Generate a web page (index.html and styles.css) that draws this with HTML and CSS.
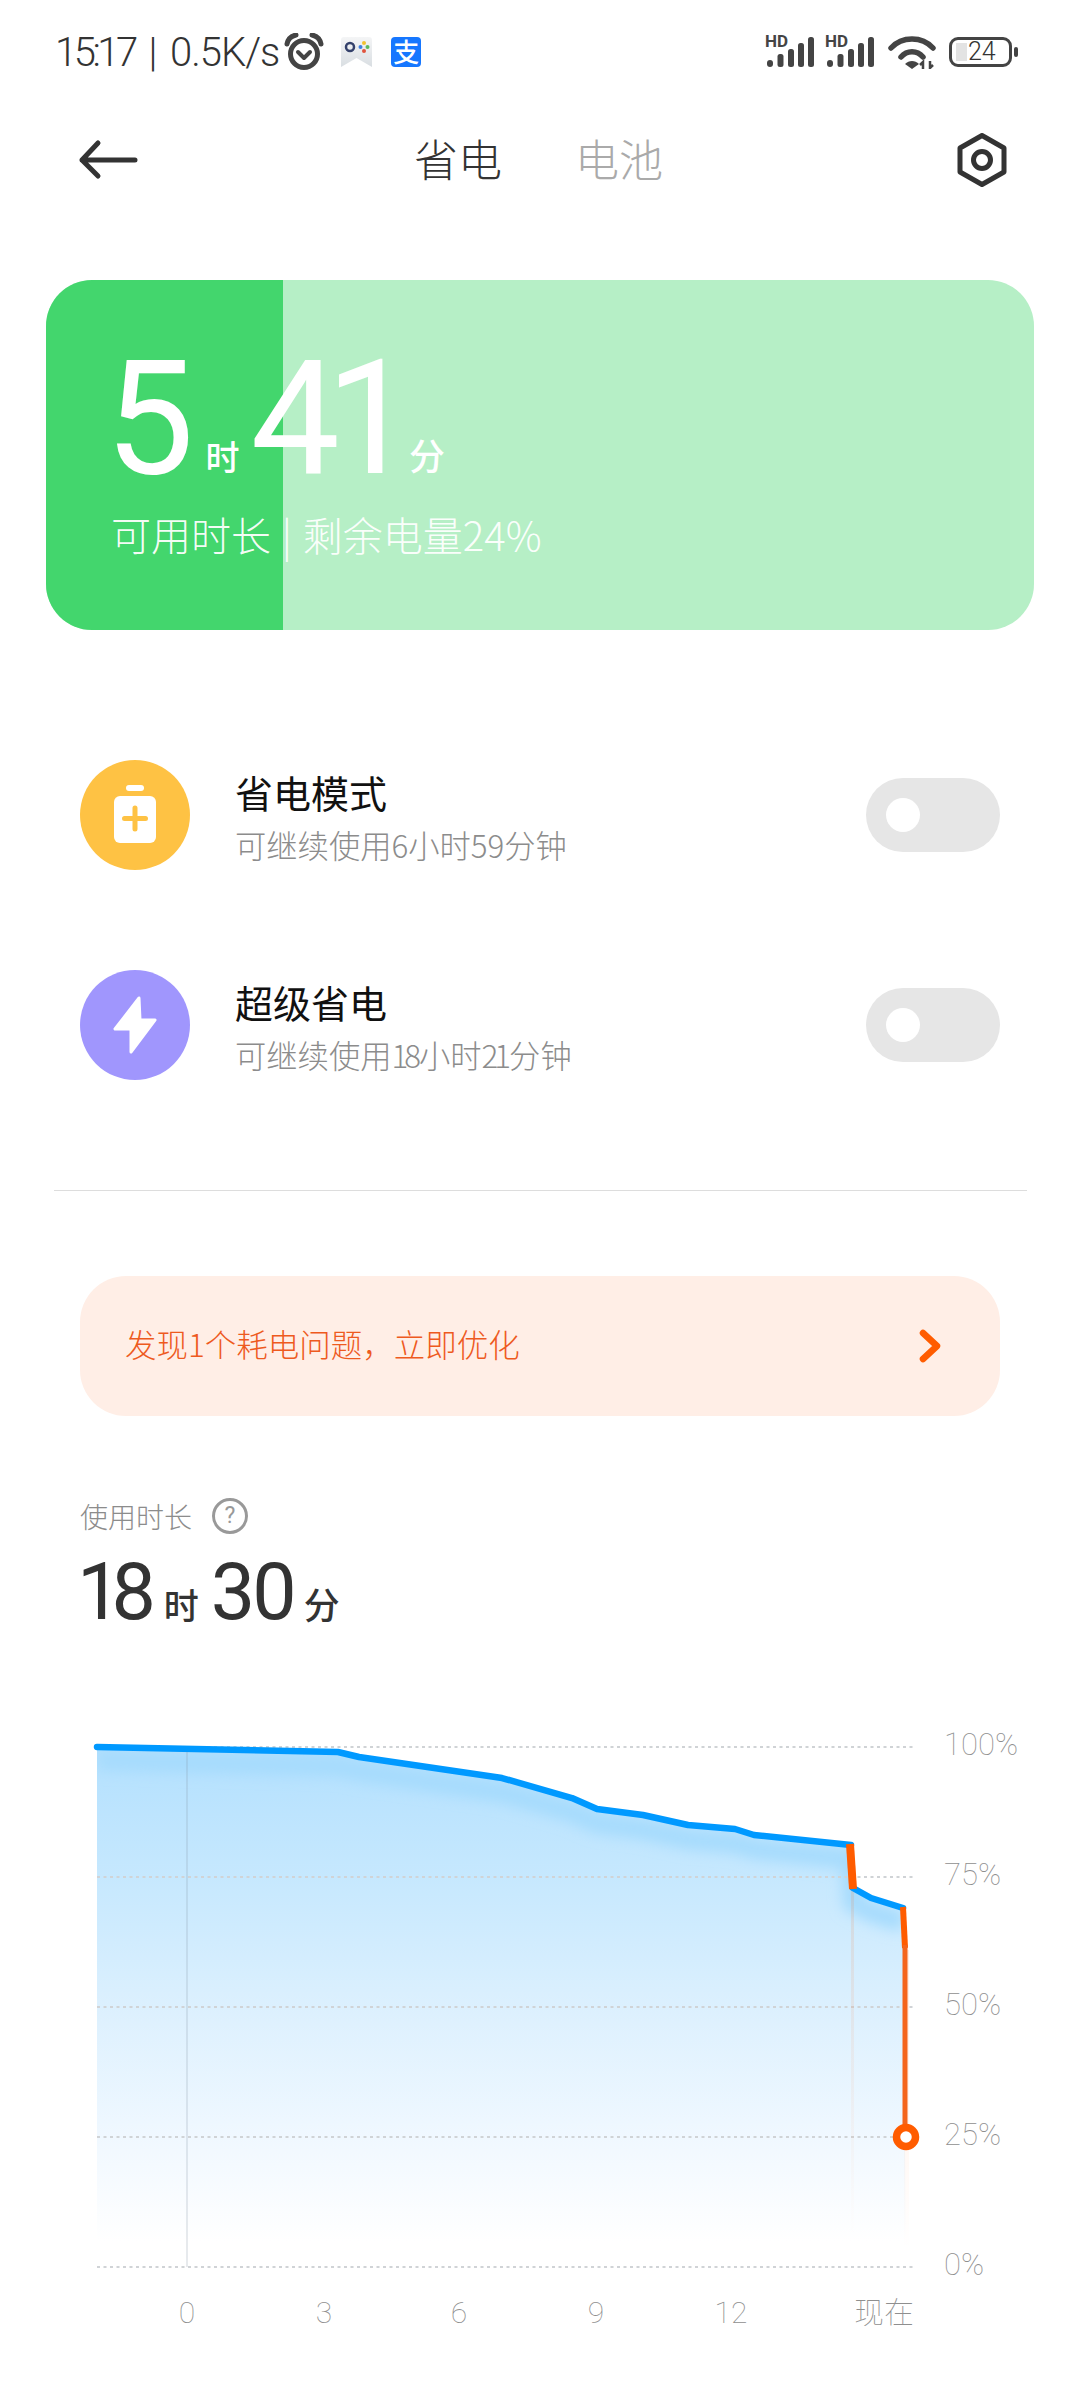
FILE: index.html
```html
<!DOCTYPE html>
<html>
<head>
    <meta charset="utf-8">
    <title>省电</title>
    <link rel="stylesheet" href="styles.css">
</head>
<body>

<div class="status">
    <div class="status-left">
        <span class="status-text"><span class="clock">15:17</span> | 0.5K/s</span>
        <svg class="ic-alarm" width="40" height="38" viewBox="0 0 40 38">
            <circle cx="20" cy="21" r="13.500" fill="none" stroke="#444" stroke-width="5"/>
            <path d="M3 11 C4 6 7 3 12 2 M37 11 C36 6 33 3 28 2" fill="none" stroke="#444" stroke-width="5" stroke-linecap="round"/>
            <path d="M14 19 L20 25 L26 19" fill="none" stroke="#444" stroke-width="4" stroke-linecap="round" stroke-linejoin="round"/>
        </svg>
        <svg class="ic-game" width="31" height="30" viewBox="0 0 31 30">
            <defs>
                <linearGradient id="gameBg" x1="0" y1="0" x2="0" y2="1">
                    <stop offset="0" stop-color="#f4f5f6"/>
                    <stop offset="1" stop-color="#d9dee2"/>
                </linearGradient>
            </defs>
            <path d="M3 0 H28 Q31 0 31 3 V30 L15.500 21 L0 30 V3 Q0 0 3 0 Z" fill="url(#gameBg)"/>
            <circle cx="9" cy="10" r="4" fill="none" stroke="#34416b" stroke-width="2.500"/>
            <circle cx="23" cy="6" r="2" fill="#f2c230"/>
            <circle cx="19.500" cy="10" r="2" fill="#3f7fe0"/>
            <circle cx="26.500" cy="10" r="2" fill="#5cb85c"/>
            <circle cx="23" cy="14" r="2" fill="#e0533d"/>
        </svg>
        <span class="ic-alipay">支</span>
    </div>
    <div class="status-right">
        <svg class="ic-signal" width="50" height="44" viewBox="0 -6 50 44">
            <text x="0" y="11" class="hd">HD</text>
            <rect x="2" y="24" width="6" height="7" rx="3"/>
            <rect x="12.500" y="18" width="6" height="13" rx="2.500"/>
            <rect x="23" y="13" width="6" height="18" rx="2.500"/>
            <rect x="33" y="7" width="6" height="24" rx="2.500"/>
            <rect x="43" y="1" width="6" height="30" rx="2.500"/>
        </svg>
        <svg class="ic-signal" width="50" height="44" viewBox="0 -6 50 44">
            <text x="0" y="11" class="hd">HD</text>
            <rect x="2" y="24" width="6" height="7" rx="3"/>
            <rect x="12.500" y="18" width="6" height="13" rx="2.500"/>
            <rect x="23" y="13" width="6" height="18" rx="2.500"/>
            <rect x="33" y="7" width="6" height="24" rx="2.500"/>
            <rect x="43" y="1" width="6" height="30" rx="2.500"/>
        </svg>
        <svg class="ic-wifi" width="48" height="34" viewBox="0 0 48 34">
            <path d="M3 13 C14 1 34 1 45 13" fill="none" stroke="#444" stroke-width="5.500" stroke-linecap="round"/>
            <path d="M13 22 C19 15 29 15 35 22" fill="none" stroke="#444" stroke-width="5.500" stroke-linecap="round"/>
            <path d="M24 34 L17 29 C21 25 27 25 31 29 Z" fill="#444"/>
            <path d="M35 34 V27 L32 30 M42 26 V33 L45 30" fill="none" stroke="#444" stroke-width="2.500"/>
        </svg>
        <div class="battery">
            <div class="battery-body">
                <div class="battery-fill"></div>
                <span class="battery-num">24</span>
            </div>
            <div class="battery-nub"></div>
        </div>
    </div>
</div>

<div class="nav">
    <svg class="nav-back" width="60" height="44" viewBox="0 0 60 44">
        <path d="M20 5 L4 22 L20 38 M4 22 H57" fill="none" stroke="#333" stroke-width="5" stroke-linecap="round" stroke-linejoin="round"/>
    </svg>
    <div class="tabs">
        <span class="tab tab-on">省电</span>
        <span class="tab">电池</span>
    </div>
    <svg class="nav-set" width="50" height="54" viewBox="0 0 50 54">
        <path d="M25 2.500 L47 15 V39 L25 51.500 L3 39 V15 Z" fill="none" stroke="#333" stroke-width="5" stroke-linejoin="round"/>
        <circle cx="25" cy="27" r="8.500" fill="none" stroke="#333" stroke-width="5"/>
    </svg>
</div>

<div class="card">
    <div class="card-fill" style="width: 24%"></div>
    <div class="card-body">
        <div class="card-time">
            <span class="big">5</span><span class="big-unit">时</span>
            <span class="big big-min">41</span><span class="big-unit">分</span>
        </div>
        <div class="card-sub">可用时长 | 剩余电量24%</div>
    </div>
</div>

<div class="modes">
    <div class="mode">
        <div class="mode-icon yellow">
            <svg width="60" height="70" viewBox="0 0 60 70">
                <rect x="21" y="5" width="18" height="6" rx="3" fill="#fff"/>
                <rect x="9" y="16" width="42" height="47" rx="6" fill="#fff"/>
                <path d="M30 28 V49 M19.500 38.500 H40.500" stroke="#fec244" stroke-width="5" stroke-linecap="round"/>
            </svg>
        </div>
        <div class="mode-text">
            <div class="mode-title">省电模式</div>
            <div class="mode-sub">可继续使用6小时59分钟</div>
        </div>
        <div class="switch"><div class="knob"></div></div>
    </div>
    <div class="mode">
        <div class="mode-icon purple">
            <svg width="60" height="70" viewBox="0 0 60 70">
                <path d="M34 8 L10 39 H26 V62 L50 30 H35 Z" fill="#fff" stroke="#fff" stroke-width="3" stroke-linejoin="round"/>
            </svg>
        </div>
        <div class="mode-text">
            <div class="mode-title">超级省电</div>
            <div class="mode-sub">可继续使用<span class="narrow">18</span>小时<span class="narrow">21</span>分钟</div>
        </div>
        <div class="switch"><div class="knob"></div></div>
    </div>
</div>

<hr class="line">

<div class="banner">
    <span class="banner-text">发现1个耗电问题，立即优化</span>
    <svg width="24" height="36" viewBox="0 0 24 36">
        <path d="M5 5 L19 18 L5 31" fill="none" stroke="#ff5c00" stroke-width="6.500" stroke-linecap="round" stroke-linejoin="round"/>
    </svg>
</div>

<div class="usage">
    <div class="usage-label">
        <span>使用时长</span>
        <span class="help">?</span>
    </div>
    <div class="usage-time">
        <span class="mid mid-hours">18</span><span class="mid-unit">时</span>
        <span class="mid">30</span><span class="mid-unit">分</span>
    </div>
</div>

<svg class="chart" width="1080" height="700" viewBox="0 1700 1080 700">
    <defs>
        <linearGradient id="areaFill" gradientUnits="userSpaceOnUse" x1="0" y1="1747" x2="0" y2="2267">
            <stop offset="0" stop-color="#b3e0fe"/>
            <stop offset="0.25" stop-color="#c6e8fe"/>
            <stop offset="0.5" stop-color="#dcf0fe"/>
            <stop offset="0.75" stop-color="#f0f8ff"/>
            <stop offset="0.95" stop-color="#ffffff"/>
        </linearGradient>
        <linearGradient id="fadeOrange" x1="0" y1="0" x2="0" y2="1">
            <stop offset="0" stop-color="#ff5c00" stop-opacity="0.12"/>
            <stop offset="1" stop-color="#ff5c00" stop-opacity="0"/>
        </linearGradient>
        <clipPath id="areaClip">
            <path d="M97 1747 L338 1752 L359 1757 L502 1778 L572 1798 L597 1809 L643 1815 L688 1825 L735 1829 L754 1835 L851 1845 L853 1888 L871 1898 L903 1908 L906 2267 L97 2267 Z"/>
        </clipPath>
        <filter id="soft" x="-5%" y="-20%" width="110%" height="140%">
            <feGaussianBlur stdDeviation="7"/>
        </filter>
    </defs>

    <path d="M97 1747 L338 1752 L359 1757 L502 1778 L572 1798 L597 1809 L643 1815 L688 1825 L735 1829 L754 1835 L851 1845 L853 1888 L871 1898 L903 1908 L906 2267 L97 2267 Z" fill="url(#areaFill)"/>
    <g clip-path="url(#areaClip)">
        <path d="M97 1760 L338 1766 L359 1771 L502 1792 L572 1812 L597 1823 L643 1829 L688 1839 L735 1843 L754 1849 L851 1859 L853 1902 L871 1912 L903 1922" fill="none" stroke="#a6dbfd" stroke-width="20" filter="url(#soft)"/>
    </g>

    <g class="grid">
        <line x1="97" y1="1747" x2="915" y2="1747"/>
        <line x1="97" y1="1877" x2="915" y2="1877"/>
        <line x1="97" y1="2007" x2="915" y2="2007"/>
        <line x1="97" y1="2137" x2="915" y2="2137"/>
        <line x1="97" y1="2267" x2="915" y2="2267"/>
    </g>

    <line x1="187" y1="1752" x2="187" y2="2267" stroke="#7f8fa0" stroke-opacity="0.25" stroke-width="1.500"/>
    <rect x="851" y="1888" width="3" height="350" fill="url(#fadeOrange)"/>
    <rect x="904" y="1950" width="5" height="300" fill="url(#fadeOrange)"/>

    <polyline class="line-blue" points="97,1747 338,1752 359,1757 502,1778 572,1798 597,1809 643,1815 688,1825 735,1829 754,1835 851,1845"/>
    <polyline class="line-blue" points="853,1888 871,1898 903,1908"/>
    <path d="M850 1844 L853 1889" class="line-red wide"/>
    <path d="M903 1907 L905 1948" class="line-red"/>
    <path d="M905 1945 V2130" class="line-red thin"/>
    <circle cx="906" cy="2137" r="9.500" fill="#fff" stroke="#ff5c00" stroke-width="7.500"/>

    <g class="axis-y">
        <text x="944" y="1755">100%</text>
        <text x="944" y="1885">75%</text>
        <text x="944" y="2015">50%</text>
        <text x="944" y="2145">25%</text>
        <text x="944" y="2275">0%</text>
    </g>
    <g class="axis-x">
        <text x="187" y="2323">0</text>
        <text x="324" y="2323">3</text>
        <text x="459" y="2323">6</text>
        <text x="596" y="2323">9</text>
        <text x="731" y="2323">12</text>
        <text x="884" y="2323">现在</text>
    </g>
</svg>

</body>
</html>
```
FILE: styles.css
```css
html, body {
    margin: 0;
    padding: 0;
}

body {
    width: 1080px;
    height: 2400px;
    overflow: hidden;
    background-color: #FFF;
    color: #333;
    font-family: Roboto, "Noto Sans CJK SC", sans-serif;
}

/* status bar */
.status {
    height: 104px;
    padding: 0 62px 0 55px;
    display: flex;
    align-items: center;
    justify-content: space-between;
}

.status-left, .status-right {
    display: flex;
    align-items: center;
}

.status-text {
    font-size: 40px;
    font-weight: 300;
    letter-spacing: -1px;
    word-spacing: 5px;
    color: #333;
}

.clock {
    letter-spacing: -3.500px;
}

.ic-alarm {
    margin-left: 5px;
}

.ic-game {
    margin-left: 17px;
}

.ic-alipay {
    width: 30px;
    height: 30px;
    margin-left: 19px;
    border-radius: 4px;
    background-color: #1677ff;
    color: #FFF;
    font-family: "Noto Sans CJK SC", sans-serif;
    font-size: 26px;
    font-weight: 500;
    line-height: 28px;
    text-align: center;
}

.status-right {
    gap: 10px;
}

.ic-signal rect {
    fill: #444;
}

.hd {
    font-family: Roboto, sans-serif;
    font-size: 17px;
    font-weight: 700;
    fill: #444;
}

.ic-wifi {
    margin: 0 3px;
}

.battery {
    display: flex;
    align-items: center;
    gap: 2px;
}

.battery-body {
    width: 63px;
    height: 30px;
    box-sizing: border-box;
    border: 3.500px solid #444;
    border-radius: 9px;
    padding-left: 4px;
    display: flex;
    align-items: center;
}

.battery-fill {
    width: 11px;
    height: 18px;
    background-color: #e3e3e3;
}

.battery-num {
    font-size: 25px;
    font-weight: 300;
    margin-left: 1px;
    line-height: 22px;
    color: #333;
}

.battery-nub {
    width: 4px;
    height: 10px;
    border-radius: 2px;
    background-color: #444;
}

/* title bar */
.nav {
    height: 112px;
    padding: 0 73px 0 78px;
    display: grid;
    grid-template-columns: 1fr auto 1fr;
    align-items: center;
}

.nav-set {
    justify-self: end;
}

.tabs {
    display: flex;
    gap: 73px;
    margin: -4px 0 0 -8px;
    font-family: "Noto Sans CJK SC", sans-serif;
    font-weight: 200;
    font-size: 44px;
    line-height: 56px;
}

.tab {
    color: #aaa;
}

.tab-on {
    color: #333;
}

/* battery card */
.card {
    position: relative;
    height: 350px;
    margin: 64px 46px 0;
    border-radius: 46px;
    overflow: hidden;
    background-color: #b6efc6;
}

.card-fill {
    position: absolute;
    top: 0;
    bottom: 0;
    left: 0;
    background-color: #43d66d;
}

.card-body {
    position: relative;
    padding: 53px 0 0 65px;
    color: #FFF;
}

.card-time {
    display: flex;
    align-items: baseline;
    height: 172px;
}

.big {
    font-size: 159px;
    line-height: 172px;
    margin-left: -6px;
}

.big-min {
    letter-spacing: -14px;
    margin-left: 11px;
}

.big-unit {
    font-family: "Noto Sans CJK SC", sans-serif;
    font-size: 34px;
    font-weight: 500;
    margin-left: 11px;
    transform: translateY(-3px);
}

.big-min + .big-unit {
    margin-left: 8px;
    font-size: 36px;
}

.card-sub {
    margin-top: 4px;
    font-family: "Noto Sans CJK SC", sans-serif;
    font-size: 40px;
    font-weight: 200;
    word-spacing: 2px;
    line-height: 50px;
    color: rgba(255, 255, 255, 0.95);
}

/* modes */
.modes {
    margin-top: 80px;
}

.mode {
    height: 210px;
    padding: 0 80px;
    display: flex;
    align-items: center;
}

.mode-icon {
    width: 110px;
    height: 110px;
    border-radius: 50%;
    display: flex;
    align-items: center;
    justify-content: center;
}

.yellow {
    background-color: #fec244;
}

.purple {
    background-color: #a096fd;
}

.mode-text {
    flex: 1;
    margin-left: 45px;
    font-family: "Noto Sans CJK SC", sans-serif;
}

.mode-title {
    font-size: 38px;
    line-height: 50px;
    margin-top: 1px;
    color: #111;
}

.mode-sub {
    margin-top: 8px;
    font-size: 31.300px;
    font-weight: 200;
    line-height: 40px;
    color: #8c8c8c;
}

.narrow {
    letter-spacing: -4px;
    margin-right: 2px;
}

.switch {
    width: 134px;
    height: 74px;
    border-radius: 37px;
    background-color: #e6e6e6;
    display: flex;
    align-items: center;
    padding-left: 20px;
    box-sizing: border-box;
}

.knob {
    width: 34px;
    height: 34px;
    border-radius: 50%;
    background-color: #FFF;
}

.line {
    margin: 60px 53px 0 54px;
    border: none;
    border-top: 1.500px solid #ddd;
}

/* banner */
.banner {
    height: 140px;
    margin: 85px 80px 0;
    padding: 0 58px 0 45px;
    border-radius: 46px;
    background-color: #ffeee6;
    display: flex;
    align-items: center;
    justify-content: space-between;
    font-family: "Noto Sans CJK SC", sans-serif;
    font-size: 31.500px;
    font-weight: 200;
    color: #ee5a1e;
}

.banner-text {
    margin-top: -6px;
}

/* usage */
.usage {
    margin: 78px 0 0 80px;
    height: 206px;
}

.usage-label {
    display: flex;
    align-items: center;
    gap: 20px;
    font-family: "Noto Sans CJK SC", sans-serif;
    font-size: 28px;
    font-weight: 200;
    color: #8c8c8c;
    height: 44px;
}

.help {
    width: 36px;
    height: 36px;
    box-sizing: border-box;
    border: 3px solid #999;
    border-radius: 50%;
    font-family: Roboto, sans-serif;
    font-size: 23px;
    font-weight: 400;
    line-height: 30px;
    text-align: center;
    color: #999;
}

.usage-time {
    display: flex;
    align-items: baseline;
    margin: 6px 0 0 -3px;
    color: #333;
}

.mid {
    font-size: 79px;
    line-height: 96px;
    letter-spacing: -3px;
}

.mid-hours {
    letter-spacing: -10px;
}

.mid-unit {
    font-family: "Noto Sans CJK SC", sans-serif;
    font-size: 35px;
    font-weight: 500;
    margin: 0 12px 0 9px;
}

.mid-hours + .mid-unit {
    margin-left: 18px;
}

.mid + .mid-unit + .mid + .mid-unit {
    margin-left: 10px;
    font-size: 36px;
}

/* chart */
.chart {
    display: block;
}

.grid line {
    stroke: #d0d3d6;
    stroke-width: 2;
    stroke-dasharray: 3 3.500;
}

.line-blue {
    fill: none;
    stroke: #0099ff;
    stroke-width: 6.500;
    stroke-linecap: round;
    stroke-linejoin: round;
}

.line-red {
    fill: none;
    stroke: #ff5c00;
    stroke-width: 6;
}

.wide {
    stroke-width: 8;
}

.thin {
    stroke-width: 5;
    stroke: #f4651c;
}

.axis-y text, .axis-x text {
    font-family: Roboto, "Noto Sans CJK SC", sans-serif;
    font-size: 31px;
    font-weight: 100;
    fill: #8f8f8f;
}

.axis-x text {
    font-size: 30px;
    text-anchor: middle;
}
```
